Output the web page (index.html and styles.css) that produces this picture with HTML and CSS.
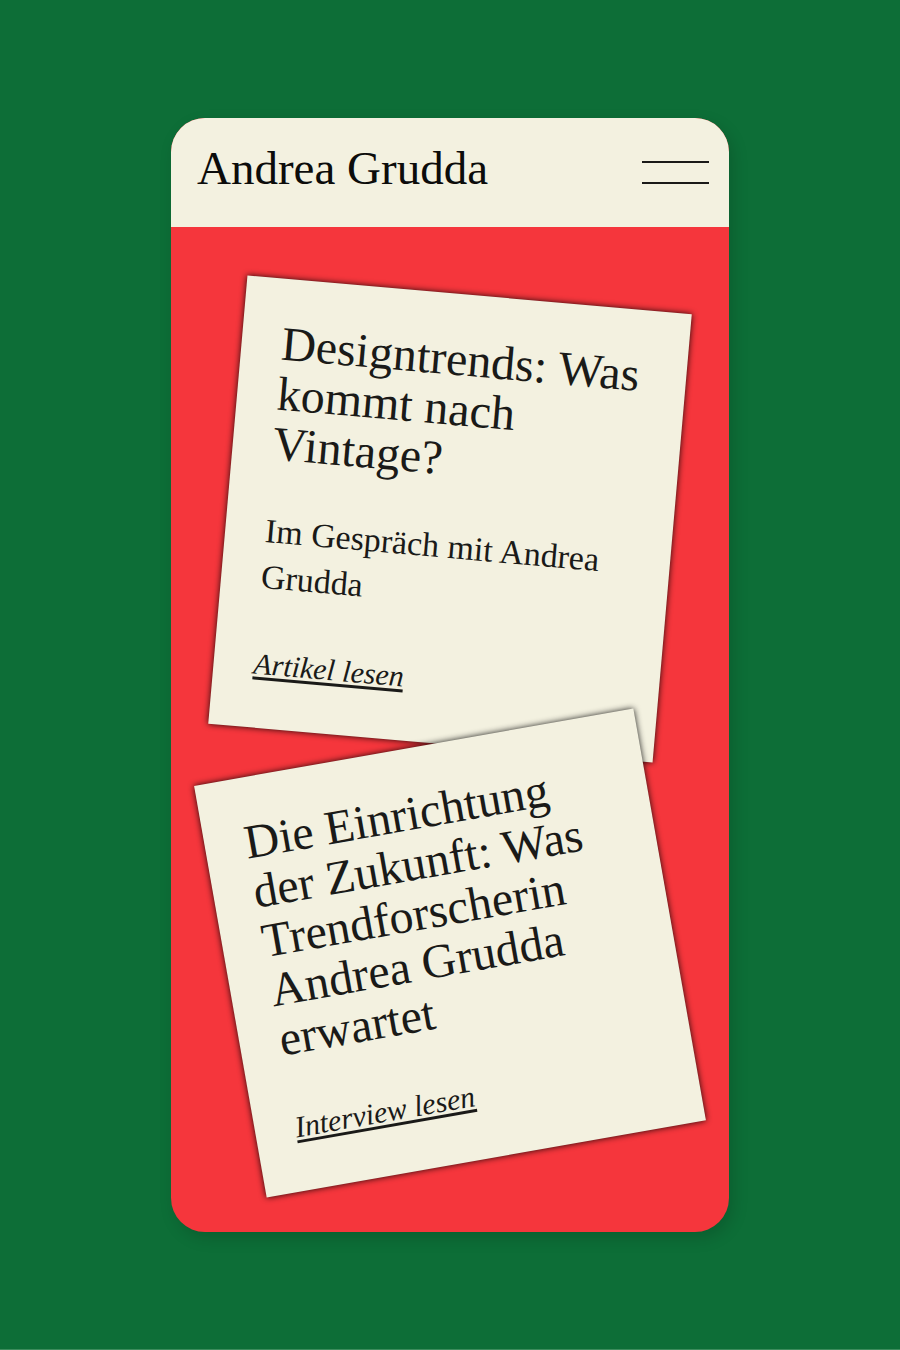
FILE: index.html
```html
<!DOCTYPE html>
<html lang="de">
<head>
<meta charset="utf-8">
<meta name="viewport" content="width=device-width, initial-scale=1">
<title>Andrea Grudda</title>
<link rel="stylesheet" href="styles.css">
</head>
<body>
<div class="phone">
	<header class="header">
		<a href="#" class="logo">Andrea Grudda</a>
		<button type="button" class="menu_btn" aria-label="Menü">
			<span></span>
			<span></span>
		</button>
	</header>
	<main class="cards">
		<article class="card card_right">
			<h2>Designtrends: Was kommt nach Vintage?</h2>
			<p>Im Gespräch mit Andrea Grudda</p>
			<a href="#" class="more">Artikel lesen</a>
		</article>
		<article class="card card_left">
			<h2>Die Einrichtung der Zukunft: Was Trendforscherin Andrea Grudda erwartet</h2>
			<a href="#" class="more">Interview lesen</a>
		</article>
	</main>
</div>
</body>
</html>
```
FILE: styles.css
```css
* {
	box-sizing: border-box;
}
body {
	margin: 0;
	min-height: 100vh;
	padding: 118px 0 117px;
	border-bottom: 1px solid #3c8c5c;
	background: #0d6e37;
	color: #1a1a18;
	font-family: "Liberation Serif", "Times New Roman", serif;
}
.phone {
	width: 62%;
	margin: 0 auto;
	border-radius: 34px;
	overflow: hidden;
	background: #f5363c;
	box-shadow: 4px 6px 16px rgba(0, 0, 0, 0.15);
}

/* header */
.header {
	display: flex;
	align-items: center;
	justify-content: space-between;
	min-height: 109px;
	padding: 0 20px 0 26px;
	background: #f3f1e0;
}
.logo {
	padding-bottom: 10px;
	color: #0c0c0b;
	font-size: 47px;
	line-height: 58px;
	text-decoration: none;
}
.menu_btn {
	display: flex;
	flex-direction: column;
	gap: 19px;
	width: 67px;
	padding: 0;
	border: 0;
	background: none;
	cursor: pointer;
}
.menu_btn span {
	height: 2px;
	background: #1a1a18;
}

/* cards */
.cards {
	padding: 67px 10% 70px;
}
.card {
	padding: 40px 36px 40px 40px;
	background: #f3f1e0;
	box-shadow: 0 0 6px rgba(0, 0, 0, 0.9);
}
.card_right {
	transform: rotate(5deg);
}
.card_left {
	transform: rotate(-10deg);
}
.card h2 {
	margin: 0 0 40px;
	font-size: 48px;
	font-weight: normal;
	line-height: 50px;
}
.card p {
	margin: 0 0 40px;
	font-size: 34px;
	line-height: 46px;
}
.more {
	display: block;
	color: inherit;
	font-size: 30px;
	font-style: italic;
	line-height: 48px;
	text-decoration: underline;
	text-decoration-thickness: 3px;
	text-decoration-skip-ink: none;
	text-underline-offset: 3px;
}
```
